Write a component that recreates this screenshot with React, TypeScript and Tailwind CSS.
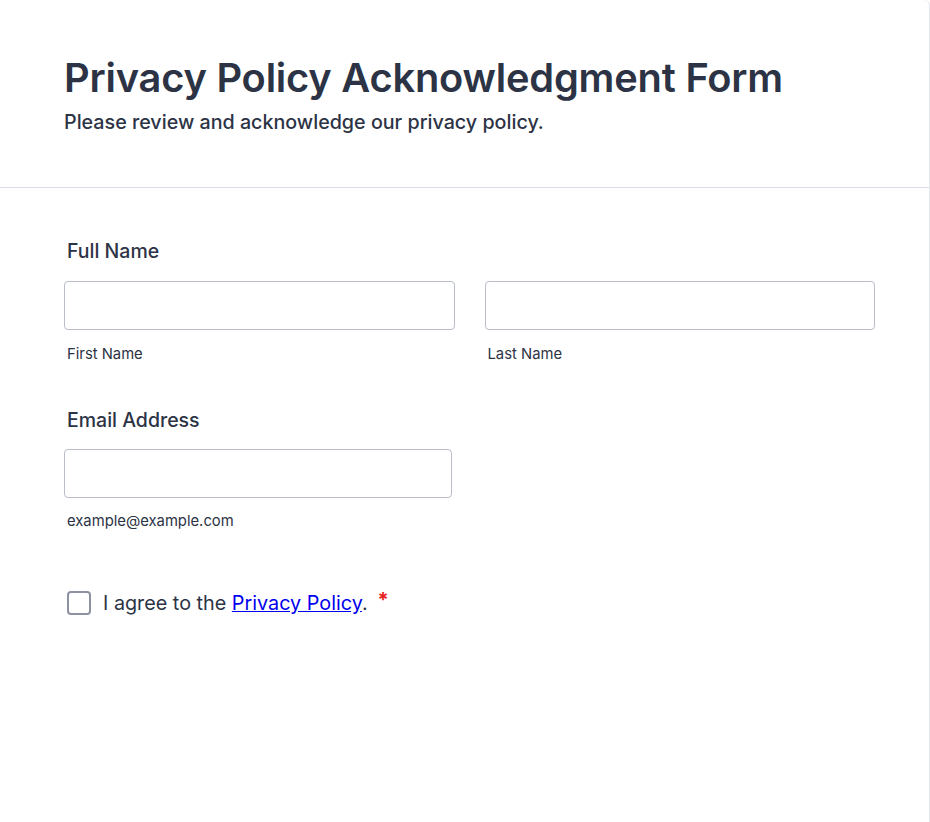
export default function App() {
  return (
    <div className="min-h-screen bg-white" style={{ fontFamily: 'Inter, "Noto Sans", sans-serif' }}>
      <div className="w-[930px] min-h-[822px] border-r border-[#e3e5ef] rounded-tr-md text-[#2c3345]">
        <div className="pl-16 pt-[52px] pb-[51px] border-b border-[#dcdde8]">
          <h1 className="text-[39.8px] leading-[52px] font-semibold tracking-[-0.2px]">
            Privacy Policy Acknowledgment Form
          </h1>
          <p className="text-[19.7px] leading-[28px] font-medium mt-[4px]">
            Please review and acknowledge our privacy policy.
          </p>
        </div>

        <div className="pl-16 pr-[54px] pt-[50px]">
          <div className="flex flex-col">
            <label className="pl-[3px] text-[19.5px] leading-[26px] font-medium">Full Name</label>
            <div className="flex gap-[30px] mt-[17px]">
              <div className="flex flex-col flex-1">
                <input className="h-[49px] w-full rounded border border-[#b8bdc9] bg-white outline-none" />
                <span className="pl-[3px] mt-[15px] text-[14.8px] leading-[18px]">First Name</span>
              </div>
              <div className="flex flex-col flex-1">
                <input className="h-[49px] w-full rounded border border-[#b8bdc9] bg-white outline-none" />
                <span className="pl-[3px] mt-[15px] text-[14.8px] leading-[18px]">Last Name</span>
              </div>
            </div>
          </div>

          <div className="flex flex-col mt-[44px]">
            <label className="pl-[3px] text-[19.5px] leading-[26px] font-medium">Email Address</label>
            <div className="flex flex-col w-[388px] mt-[16px]">
              <input className="h-[49px] w-full rounded border border-[#b8bdc9] bg-white outline-none" />
              <span className="pl-[3px] mt-[14px] text-[14.8px] leading-[18px]">example@example.com</span>
            </div>
          </div>

          <div className="flex items-center mt-[61px] pl-[3px]">
            <span className="w-6 h-6 rounded border-2 border-[#8d91a2] bg-white shrink-0" />
            <span className="ml-3 text-[19.8px] leading-6">
              I agree to the{' '}
              <a href="#" className="text-[#0000ee] underline">Privacy Policy</a>.
            </span>
            <span className="ml-[10px] -mt-[6px] text-[20px] font-bold text-[#e5231f]">*</span>
          </div>
        </div>
      </div>
    </div>
  )
}
